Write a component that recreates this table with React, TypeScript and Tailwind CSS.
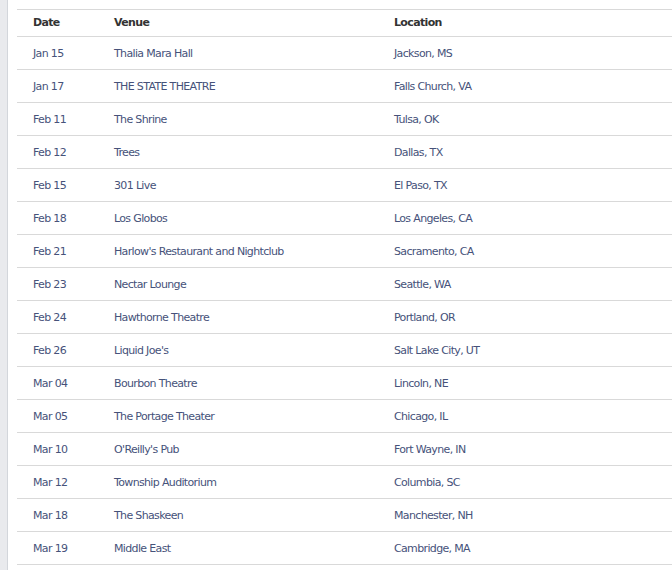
const shows = [
  { date: 'Jan 15', venue: 'Thalia Mara Hall', location: 'Jackson, MS' },
  { date: 'Jan 17', venue: 'THE STATE THEATRE', location: 'Falls Church, VA' },
  { date: 'Feb 11', venue: 'The Shrine', location: 'Tulsa, OK' },
  { date: 'Feb 12', venue: 'Trees', location: 'Dallas, TX' },
  { date: 'Feb 15', venue: '301 Live', location: 'El Paso, TX' },
  { date: 'Feb 18', venue: 'Los Globos', location: 'Los Angeles, CA' },
  { date: 'Feb 21', venue: "Harlow's Restaurant and Nightclub", location: 'Sacramento, CA' },
  { date: 'Feb 23', venue: 'Nectar Lounge', location: 'Seattle, WA' },
  { date: 'Feb 24', venue: 'Hawthorne Theatre', location: 'Portland, OR' },
  { date: 'Feb 26', venue: "Liquid Joe's", location: 'Salt Lake City, UT' },
  { date: 'Mar 04', venue: 'Bourbon Theatre', location: 'Lincoln, NE' },
  { date: 'Mar 05', venue: 'The Portage Theater', location: 'Chicago, IL' },
  { date: 'Mar 10', venue: "O'Reilly's Pub", location: 'Fort Wayne, IN' },
  { date: 'Mar 12', venue: 'Township Auditorium', location: 'Columbia, SC' },
  { date: 'Mar 18', venue: 'The Shaskeen', location: 'Manchester, NH' },
  { date: 'Mar 19', venue: 'Middle East', location: 'Cambridge, MA' },
];

function App() {
  return (
    <div className="flex h-[570px] w-[672px] overflow-hidden bg-white font-['DejaVu_Sans',sans-serif] text-[11px] tracking-[-0.65px]">
      {/* left gutter */}
      <div className="w-[8px] shrink-0 border-r border-[#d3d6db] bg-[#e9eaed]" />

      <div className="flex-1 pl-[9px] pt-[9px]">
        <div className="border-t border-[#d9d9d9]">
          <div className="grid h-[27px] grid-cols-[97px_280px_1fr] items-center border-b border-[#d9d9d9] pt-px font-bold text-[#333]">
            <div className="pl-4">Date</div>
            <div>Venue</div>
            <div>Location</div>
          </div>
          {shows.map((s) => (
            <div
              key={s.date + s.venue}
              className="grid h-[33px] grid-cols-[97px_280px_1fr] items-center border-b border-[#d9d9d9] pt-[2px] text-[#46527a]"
            >
              <div className="pl-4">{s.date}</div>
              <div>{s.venue}</div>
              <div>{s.location}</div>
            </div>
          ))}
        </div>
      </div>
    </div>
  );
}

export default App;
